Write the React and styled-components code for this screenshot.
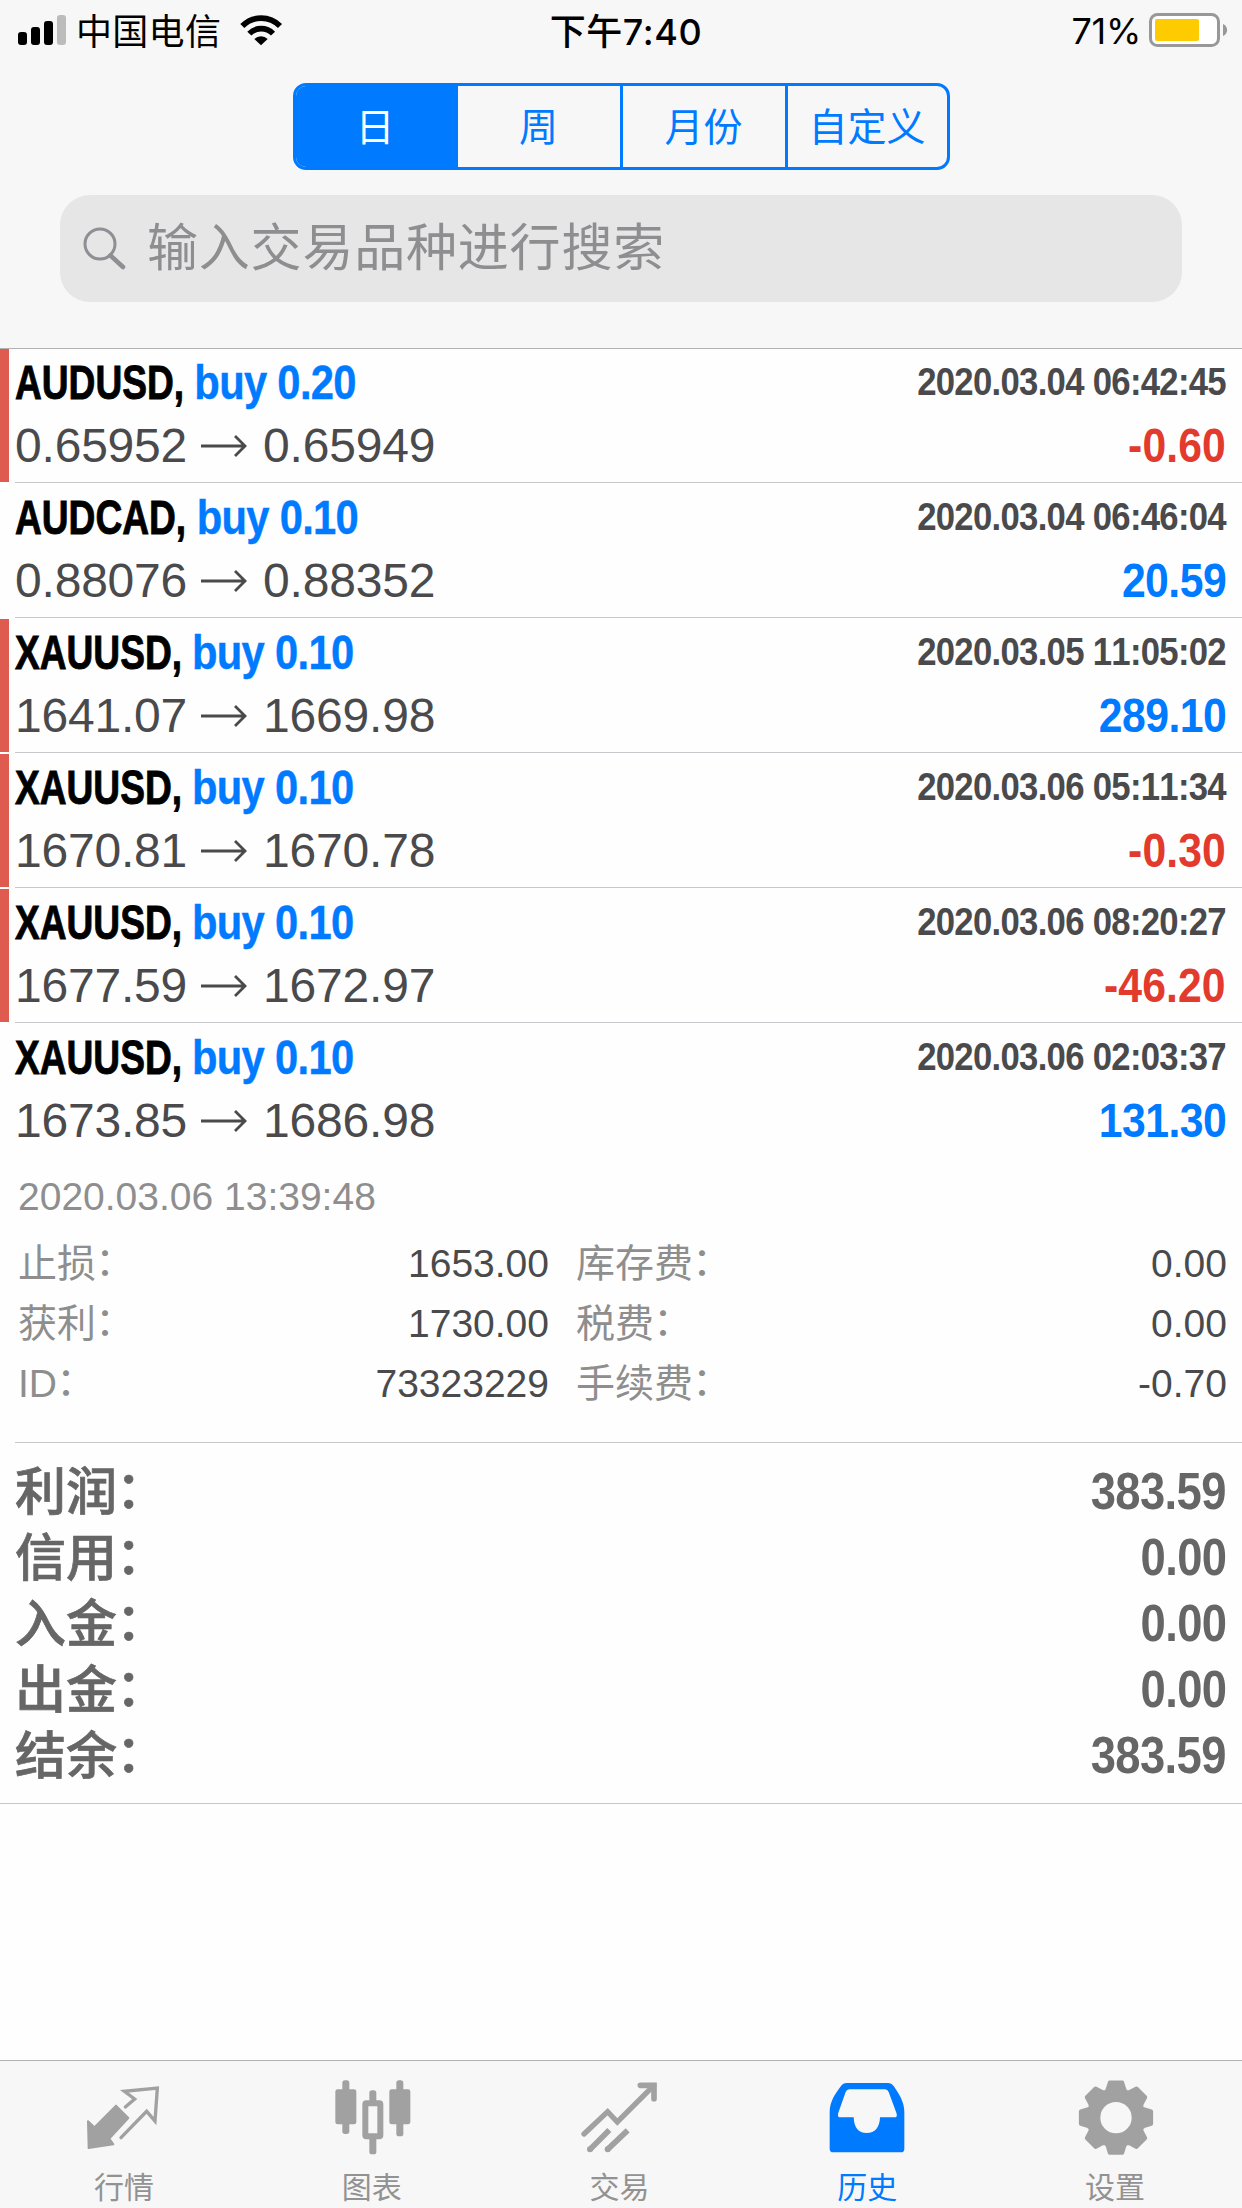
import React, { useState } from "react";
import styled, { createGlobalStyle } from "styled-components";

const deals = [
  { symbol: "AUDUSD", side: "buy 0.20", open: "0.65952", close: "0.65949", time: "2020.03.04 06:42:45", profit: "-0.60", marked: true },
  { symbol: "AUDCAD", side: "buy 0.10", open: "0.88076", close: "0.88352", time: "2020.03.04 06:46:04", profit: "20.59", marked: false },
  { symbol: "XAUUSD", side: "buy 0.10", open: "1641.07", close: "1669.98", time: "2020.03.05 11:05:02", profit: "289.10", marked: true },
  { symbol: "XAUUSD", side: "buy 0.10", open: "1670.81", close: "1670.78", time: "2020.03.06 05:11:34", profit: "-0.30", marked: true },
  { symbol: "XAUUSD", side: "buy 0.10", open: "1677.59", close: "1672.97", time: "2020.03.06 08:20:27", profit: "-46.20", marked: true },
  {
    symbol: "XAUUSD",
    side: "buy 0.10",
    open: "1673.85",
    close: "1686.98",
    time: "2020.03.06 02:03:37",
    profit: "131.30",
    marked: false,
    details: {
      openTime: "2020.03.06 13:39:48",
      fields: [
        ["止损", "1653.00", "库存费", "0.00"],
        ["获利", "1730.00", "税费", "0.00"],
        ["ID", "73323229", "手续费", "-0.70"],
      ],
    },
  },
];

const totals = [
  ["利润", "383.59"],
  ["信用", "0.00"],
  ["入金", "0.00"],
  ["出金", "0.00"],
  ["结余", "383.59"],
];

const periods = ["日", "周", "月份", "自定义"];

const gearPoints = () => {
  const points = [];
  for (let i = 0; i < 8; i++) {
    [
      [-22.5, 82],
      [-17, 87],
      [-10, 107],
      [10, 107],
      [17, 87],
    ].forEach(([shift, r]) => {
      const angle = ((i * 45 + shift - 90) * Math.PI) / 180;
      points.push(`${(883 + r * Math.cos(angle)).toFixed(1)},${(232 + r * Math.sin(angle)).toFixed(1)}`);
    });
  }
  return points.join(" ");
};

const QuotesIcon = () => (
  <TabSvg viewBox="252 110 240 240">
    <path d="M376 200L404 176L373 153L472 143L465 242L440 213L363 292" fill="none" stroke="currentColor" strokeWidth="10" strokeLinecap="round" />
    <path d="M348 196L385 233L328 295L340 312L266 323L264 243L283 261Z" fill="currentColor" stroke="currentColor" strokeWidth="6" strokeLinejoin="round" />
  </TabSvg>
);

const ChartIcon = () => (
  <TabSvg viewBox="995 110 240 240">
    <g fill="currentColor">
      <rect x="1026" y="120" width="21" height="161" rx="8" />
      <rect x="1005" y="147" width="63" height="105" rx="7" />
      <rect x="1107" y="150" width="21" height="60" rx="8" />
      <rect x="1107" y="280" width="21" height="62" rx="8" />
      <rect x="1188" y="120" width="21" height="168" rx="8" />
      <rect x="1167" y="147" width="63" height="105" rx="7" />
    </g>
    <rect x="1095" y="189" width="45" height="99" rx="3" fill="#f7f7f7" stroke="currentColor" strokeWidth="18" />
  </TabSvg>
);

const TradeIcon = () => (
  <TabSvg viewBox="478 110 240 240">
    <g fill="none" stroke="currentColor" strokeWidth="16">
      <path d="M493 281L564 214L593 245L702 136" strokeLinecap="round" />
      <path d="M662 135H703V175" strokeWidth="17" strokeLinecap="round" />
      <path d="M510 328L569 269M563 328L624 270" strokeWidth="17" />
    </g>
    <circle cx="511" cy="327" r="9" fill="currentColor" />
    <circle cx="564" cy="327" r="9" fill="currentColor" />
  </TabSvg>
);

const HistoryIcon = () => (
  <TabSvg viewBox="16 110 240 240">
    <path
      fill="currentColor"
      fillRule="evenodd"
      d="M75 128H200Q210 128 216 137C232 160 248 185 248 215V325Q248 336 238 336H35Q24 336 24 325V215C24 185 40 160 58 137Q64 128 75 128ZM83 147Q75 147 72 155L50 217Q46 231 56 231H96C97 262 110 278 135 278C160 278 174 262 175 231H218Q229 231 224 217L201 155Q198 147 190 147Z"
    />
  </TabSvg>
);

const SettingsIcon = () => (
  <TabSvg viewBox="760 110 240 240">
    <polygon points={gearPoints()} fill="currentColor" stroke="currentColor" strokeWidth="12" strokeLinejoin="round" />
    <circle cx="883" cy="232" r="47" fill="#f7f7f7" />
  </TabSvg>
);

const tabs = [
  { label: "行情", Icon: QuotesIcon },
  { label: "图表", Icon: ChartIcon },
  { label: "交易", Icon: TradeIcon },
  { label: "历史", Icon: HistoryIcon },
  { label: "设置", Icon: SettingsIcon },
];

const SignalIcon = () => (
  <svg width="48" height="30" viewBox="0 0 48 30">
    <rect x="0" y="17" width="9" height="13" rx="3" />
    <rect x="13" y="12" width="9" height="18" rx="3" />
    <rect x="26" y="6" width="9" height="24" rx="3" />
    <rect x="39" y="0" width="9" height="30" rx="3" fill="#bcbcbc" />
  </svg>
);

const WifiIcon = () => (
  <svg width="44" height="32" viewBox="717 42 132 96">
    <g fill="none" stroke="#000" strokeWidth="17">
      <path d="M727 78A79 79 0 0 1 840 78" />
      <path d="M748 101A49 49 0 0 1 819 101" />
    </g>
    <path d="M783 136L763 117A28 28 0 0 1 803 117Z" />
  </svg>
);

const BatteryIcon = () => (
  <svg width="80" height="34" viewBox="0 0 80 34">
    <rect x="1.5" y="1.5" width="68" height="31" rx="7" fill="#fff" stroke="#98989b" strokeWidth="3" />
    <rect x="6" y="6" width="44" height="22" rx="2" fill="#fecb00" />
    <path d="M74 11C79.5 13 79.5 21 74 23Z" fill="#98989b" />
  </svg>
);

const SearchIcon = () => (
  <SearchSvg width="44" height="44" viewBox="0 0 44 44">
    <circle cx="17" cy="17" r="15" strokeWidth="3" />
    <path d="M27.5 28.5L40 40" strokeWidth="4.5" strokeLinecap="round" />
  </SearchSvg>
);

const ArrowIcon = () => (
  <ArrowSvg width="46" height="24" viewBox="0 0 46 24">
    <path d="M0 12H44M34 2L44 12L34 22" fill="none" stroke="currentColor" strokeWidth="2.8" />
  </ArrowSvg>
);

const Deal = ({ deal }) => (
  <DealRow>
    <Marker $visible={deal.marked} />
    <DealBody>
      <Line>
        <Symbol>
          {deal.symbol}, <Side>{deal.side}</Side>
        </Symbol>
        <Time>{deal.time}</Time>
      </Line>
      <Line>
        <Prices>
          <span>{deal.open}</span>
          <ArrowIcon />
          <span>{deal.close}</span>
        </Prices>
        <Profit $loss={deal.profit.startsWith("-")}>{deal.profit}</Profit>
      </Line>
      {deal.details && (
        <Details>
          <OpenTime>{deal.details.openTime}</OpenTime>
          {deal.details.fields.map(([leftLabel, leftValue, rightLabel, rightValue]) => (
            <DetailRow key={leftLabel}>
              <DetailLabel>
                {leftLabel}
                <Colon>：</Colon>
              </DetailLabel>
              <DetailValue>{leftValue}</DetailValue>
              <DetailLabel>
                {rightLabel}
                <Colon>：</Colon>
              </DetailLabel>
              <DetailValue>{rightValue}</DetailValue>
            </DetailRow>
          ))}
        </Details>
      )}
    </DealBody>
  </DealRow>
);

const App = () => {
  const [period, setPeriod] = useState("日");
  const [activeTab, setActiveTab] = useState("历史");

  return (
    <>
      <GlobalStyle />
      <Screen>
        <Header>
          <StatusBar>
            <StatusLeft>
              <SignalIcon />
              <Carrier>中国电信</Carrier>
              <WifiIcon />
            </StatusLeft>
            <Clock>下午7:40</Clock>
            <StatusRight>
              <Percent>71%</Percent>
              <BatteryIcon />
            </StatusRight>
          </StatusBar>
          <Segments>
            {periods.map((item) => (
              <Segment key={item} $active={item === period} onClick={() => setPeriod(item)}>
                {item}
              </Segment>
            ))}
          </Segments>
          <SearchBox>
            <SearchIcon />
            <Placeholder>输入交易品种进行搜索</Placeholder>
          </SearchBox>
        </Header>

        <DealList>
          {deals.map((deal) => (
            <Deal key={deal.time} deal={deal} />
          ))}
        </DealList>

        <Totals>
          {totals.map(([label, value]) => (
            <TotalRow key={label}>
              <TotalLabel>
                {label}
                <Colon>：</Colon>
              </TotalLabel>
              <TotalValue>{value}</TotalValue>
            </TotalRow>
          ))}
        </Totals>

        <TabBar>
          {tabs.map(({ label, Icon }) => (
            <Tab key={label} $active={label === activeTab} onClick={() => setActiveTab(label)}>
              <Icon />
              <TabLabel $active={label === activeTab}>{label}</TabLabel>
            </Tab>
          ))}
        </TabBar>
      </Screen>
    </>
  );
};

export default App;

const GlobalStyle = createGlobalStyle`
  * {
    box-sizing: border-box;
  }

  body {
    margin: 0;
    background: #fefefe;
    font-family: "Liberation Sans", "Noto Sans CJK SC", sans-serif;
  }

  svg {
    display: block;
    flex-shrink: 0;
  }
`;

const Screen = styled.div`
  display: flex;
  flex-direction: column;
  width: 1242px;
  height: 2208px;
  overflow: hidden;
  background: #fefefe;
`;

const Header = styled.header`
  display: flex;
  flex-direction: column;
  align-items: center;
  height: 349px;
  background: #f7f7f7;
  border-bottom: 1px solid #b2b2b2;
`;

const StatusBar = styled.div`
  display: grid;
  grid-template-columns: 1fr auto 1fr;
  align-items: center;
  align-self: stretch;
  height: 60px;
  padding: 0 13px 0 18px;
  font-family: Inter, "Noto Sans CJK SC", sans-serif;
  font-size: 36px;
  line-height: 56px;
  color: #000;
`;

const StatusLeft = styled.div`
  display: flex;
  align-items: center;
`;

const Carrier = styled.span`
  margin: 0 18px 0 10px;
  padding-top: 3px;
  letter-spacing: 0.3px;
`;

const Clock = styled.div`
  padding: 3px 0 0 5px;
  font-weight: 500;
  letter-spacing: 0.6px;
`;

const StatusRight = styled.div`
  display: flex;
  align-items: center;
  justify-content: flex-end;
  gap: 8px;
`;

const Percent = styled.span`
  padding-top: 2px;
  letter-spacing: -0.3px;
`;

const Segments = styled.div`
  display: grid;
  grid-template-columns: 159px 165px 165px 162px;
  width: 657px;
  height: 87px;
  margin-top: 23px;
  border: 3px solid #007aff;
  border-radius: 13px;
  overflow: hidden;
`;

const Segment = styled.button`
  padding: 0;
  border: none;
  border-left: 3px solid #007aff;
  background: ${({ $active }) => ($active ? "#007aff" : "transparent")};
  color: ${({ $active }) => ($active ? "#fff" : "#007aff")};
  font-family: inherit;
  font-size: 39px;
  line-height: 83px;
  cursor: pointer;

  &:first-child {
    border-left: none;
  }
`;

const SearchBox = styled.div`
  display: flex;
  align-items: center;
  gap: 20px;
  width: 1122px;
  height: 107px;
  margin-top: 25px;
  padding-left: 23px;
  border-radius: 30px;
  background: #e6e6e7;
`;

const SearchSvg = styled.svg`
  fill: none;
  stroke: #8e8e93;
`;

const Placeholder = styled.span`
  padding-top: 1px;
  font-size: 51px;
  line-height: 106px;
  letter-spacing: 0.8px;
  color: #8e8e90;
`;

const DealList = styled.div`
  display: flex;
  flex-direction: column;
`;

const DealRow = styled.div`
  display: flex;

  & + & {
    padding-top: 1px;
  }
`;

const Marker = styled.div`
  width: 9px;
  margin-right: 6px;
  margin-bottom: 1px;
  background: ${({ $visible }) => ($visible ? "#df5b50" : "transparent")};
`;

const DealBody = styled.div`
  flex: 1;
  padding: 2px 15px 5px 0;
  border-bottom: 1px solid #c8c7cc;
`;

const Line = styled.div`
  display: flex;
  align-items: center;
  justify-content: space-between;
  height: 63px;
  line-height: 63px;
`;

/* bold text squeezed horizontally, stands in for a condensed face */
const Condensed = styled.span`
  display: inline-block;
  font-weight: 700;
  white-space: pre;
  transform: scaleX(0.89);
  transform-origin: right center;
  letter-spacing: -0.7px;
  font-kerning: none;
`;

const Symbol = styled(Condensed)`
  font-size: 48px;
  font-kerning: normal;
  letter-spacing: 0;
  color: #000;
  transform: scaleX(0.773);
  transform-origin: left center;
  -webkit-text-stroke: 0.9px currentColor;
`;

const Side = styled.span`
  display: inline-block;
  letter-spacing: -0.8px;
  color: #007aff;
  transform: scaleX(1.125);
  transform-origin: left center;
  -webkit-text-stroke: 0.4px currentColor;
`;

const Time = styled(Condensed)`
  margin: -2px 1px 0 0;
  font-size: 39px;
  letter-spacing: -0.8px;
  color: #4a4a4c;
`;

const Prices = styled.div`
  display: flex;
  align-items: center;
  font-size: 48px;
  letter-spacing: -0.2px;
  font-kerning: none;
  color: #4a4a4c;
`;

const ArrowSvg = styled.svg`
  margin: 0 16px 0 14px;
`;

const Profit = styled(Condensed)`
  margin-right: 1px;
  font-size: 48px;
  letter-spacing: ${({ $loss }) => ($loss ? "0.1px" : "-0.6px")};
  color: ${({ $loss }) => ($loss ? "#e23a2c" : "#007aff")};
`;

const Details = styled.div`
  display: flex;
  flex-direction: column;
  padding: 13px 0 23px 3px;
  font-size: 39px;
  font-kerning: none;
`;

const OpenTime = styled.div`
  margin-bottom: 6px;
  line-height: 63px;
  color: #8e8e8e;
`;

const DetailRow = styled.div`
  display: grid;
  grid-template-columns: 200px 331px 1fr auto;
  line-height: 60px;
`;

const DetailLabel = styled.span`
  height: 60px;
  color: #8e8e8e;

  &:nth-child(3) {
    padding-left: 27px;
  }
`;

const DetailValue = styled.span`
  text-align: right;
  color: #4a4a4c;
`;

/* the full-width colon sits low in the font, lift it to the middle of the glyphs */
const Colon = styled.span`
  margin-left: -0.02em;
  line-height: 1;
  vertical-align: 0.04em;
`;

const Totals = styled.section`
  display: flex;
  flex-direction: column;
  padding: 16px 15px 14px;
  border-bottom: 1px solid #c8c7cc;
`;

const TotalRow = styled.div`
  display: flex;
  justify-content: space-between;
  height: 66px;
  font-size: 51px;
  line-height: 66px;
  color: #666;
`;

const TotalLabel = styled.span`
  padding-top: 1px;
  font-weight: 500;
  -webkit-text-stroke: 0.7px currentColor;
`;

const TotalValue = styled(Condensed)`
  margin-right: 1px;
`;

const TabBar = styled.nav`
  display: grid;
  grid-template-columns: repeat(5, 1fr);
  height: 148px;
  margin-top: auto;
  padding-right: 3px;
  background: #f7f7f7;
  border-top: 1px solid #b2b2b2;
`;

const Tab = styled.button`
  display: flex;
  flex-direction: column;
  align-items: center;
  padding: 16px 0 0;
  border: none;
  background: none;
  color: ${({ $active }) => ($active ? "#007aff" : "#a1a1a1")};
  font-family: inherit;
  cursor: pointer;
`;

const TabSvg = styled.svg`
  width: 80px;
  height: 80px;
`;

const TabLabel = styled.span`
  margin-top: 14px;
  font-size: 30px;
  line-height: 34px;
  color: ${({ $active }) => ($active ? "#007aff" : "#929292")};
`;
